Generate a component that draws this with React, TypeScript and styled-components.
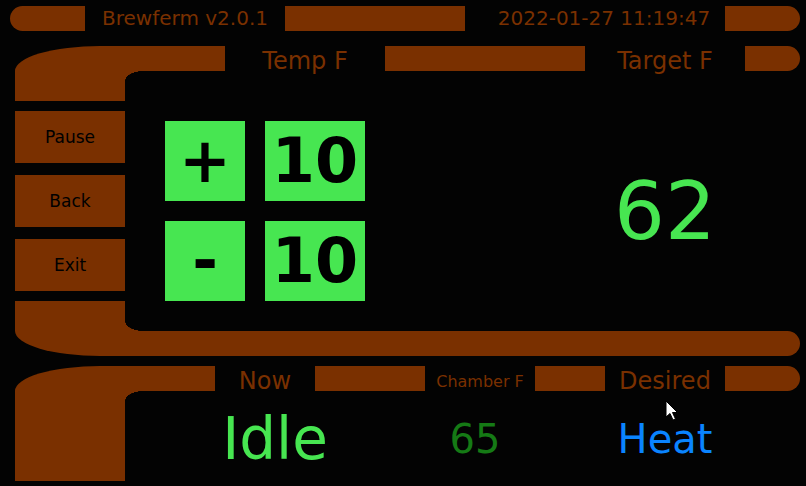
import React from "react";
import styled, { createGlobalStyle } from "styled-components";

const BROWN = "#7a3000";
const GREEN = "#47e651";

const Global = createGlobalStyle`
  html, body { margin: 0; padding: 0; background: #000; }
  body { font-family: "DejaVu Sans", Verdana, sans-serif; }
  * { box-sizing: border-box; }
`;

const Screen = styled.div`
  position: relative;
  width: 806px;
  height: 486px;
  background: #030303;
  display: flex;
  flex-direction: column;
  overflow: hidden;
`;

const TopBar = styled.div`
  display: flex;
  height: 25px;
  margin: 6px 6px 0 10px;
`;

const Row = styled.div`
  display: flex;
  height: 25px;
`;

const Bar = styled.div<{ $w: number }>`
  width: ${(p) => p.$w}px;
  height: 25px;
  background: ${BROWN};
  flex: none;
`;

const Pill = styled(Bar)<{ $side: "left" | "right" }>`
  border-radius: ${(p) => (p.$side === "left" ? "12.5px 0 0 12.5px" : "0 12.5px 12.5px 0")};
`;

const ElbowBar = styled(Bar)`
  border-top-left-radius: 85px 25px;
`;

const Label = styled.div<{ $w: number; $size: number; $pl?: number; $pt?: number }>`
  width: ${(p) => p.$w}px;
  flex: none;
  height: 25px;
  line-height: 25px;
  padding-left: ${(p) => p.$pl ?? 0}px;
  padding-top: ${(p) => p.$pt ?? 0}px;
  font-size: ${(p) => p.$size}px;
  color: ${BROWN};
  text-align: center;
  white-space: nowrap;
`;

const Frame = styled.section<{ $mt: number }>`
  display: flex;
  flex-direction: column;
  width: 785px;
  margin: ${(p) => p.$mt}px 0 0 15px;
`;

const Body = styled.div<{ $h: number }>`
  display: flex;
  height: ${(p) => p.$h}px;
`;

const Side = styled.div`
  width: 110px;
  flex: none;
  display: flex;
  flex-direction: column;
`;

const Stub = styled.div<{ $h: number; $corner: "top" | "bottom"; $mt?: number }>`
  position: relative;
  height: ${(p) => p.$h}px;
  margin-top: ${(p) => p.$mt ?? 0}px;
  background: ${BROWN};
  flex: none;
  &::after {
    content: "";
    position: absolute;
    left: 100%;
    ${(p) => (p.$corner === "top" ? "top: 0;" : "bottom: 0;")}
    width: 18px;
    height: 10px;
    background: radial-gradient(
      18px 10px at 100% ${(p) => (p.$corner === "top" ? "100%" : "0%")},
      transparent 98%,
      ${BROWN} 100%
    );
  }
`;

const SideButtons = styled.div`
  display: flex;
  flex-direction: column;
  gap: 12px;
  margin-top: 10px;
`;

const SideButton = styled.button`
  height: 52px;
  width: 110px;
  border: none;
  padding: 0;
  background: ${BROWN};
  color: #000;
  font-family: "DejaVu Sans", Verdana, sans-serif;
  font-size: 17px;
  cursor: pointer;
`;

const Content = styled.div`
  flex: 1;
  display: flex;
  padding: 50px 0 0 40px;
`;

const Stepper = styled.div`
  display: grid;
  grid-template-columns: 80px 100px;
  grid-auto-rows: 80px;
  gap: 20px;
`;

const StepButton = styled.button`
  border: none;
  padding: 0;
  background: ${GREEN};
  color: #000;
  font-family: "DejaVu Sans", Verdana, sans-serif;
  font-weight: bold;
  font-size: 62px;
  display: flex;
  align-items: center;
  justify-content: center;
  line-height: 1;
`;

const TargetValue = styled.div`
  margin-left: auto;
  margin-right: 55px;
  width: 160px;
  height: 180px;
  display: flex;
  align-items: center;
  justify-content: center;
  font-size: 80px;
  color: ${GREEN};
`;

const Footer = styled.div`
  height: 25px;
  background: ${BROWN};
  border-radius: 0 12.5px 12.5px 0;
  border-bottom-left-radius: 85px 25px;
`;

const StatusGrid = styled.div`
  flex: 1;
  display: grid;
  grid-template-columns: 300px 100px 60px 160px;
  align-items: center;
  padding-top: 6px;
`;

const Status = styled.div<{ $size: number; $color: string }>`
  text-align: center;
  font-size: ${(p) => p.$size}px;
  color: ${(p) => p.$color};
  white-space: nowrap;
`;

const Cursor = styled.svg`
  position: absolute;
  left: 665px;
  top: 400px;
`;

export default function App() {
  return (
    <Screen>
      <Global />
      <TopBar>
        <Pill $w={75} $side="left" />
        <Label $w={200} $size={20}>Brewferm v2.0.1</Label>
        <Bar $w={180} />
        <Label $w={260} $size={20} $pl={18}>2022-01-27 11:19:47</Label>
        <Pill $w={75} $side="right" />
      </TopBar>

      <Frame $mt={15}>
        <Row>
          <ElbowBar $w={210} />
          <Label $w={160} $size={24} $pt={3}>Temp F</Label>
          <Bar $w={200} />
          <Label $w={160} $size={24} $pt={3}>Target F</Label>
          <Pill $w={55} $side="right" />
        </Row>
        <Body $h={260}>
          <Side>
            <Stub $h={30} $corner="top" />
            <SideButtons>
              <SideButton>Pause</SideButton>
              <SideButton>Back</SideButton>
              <SideButton>Exit</SideButton>
            </SideButtons>
            <Stub $h={30} $corner="bottom" $mt={10} />
          </Side>
          <Content>
            <Stepper>
              <StepButton>+</StepButton>
              <StepButton>10</StepButton>
              <StepButton>-</StepButton>
              <StepButton>10</StepButton>
            </Stepper>
            <TargetValue>62</TargetValue>
          </Content>
        </Body>
        <Footer />
      </Frame>

      <Frame $mt={10}>
        <Row>
          <ElbowBar $w={200} />
          <Label $w={100} $size={24} $pt={3}>Now</Label>
          <Bar $w={110} />
          <Label $w={110} $size={16} $pt={3}>Chamber F</Label>
          <Bar $w={70} />
          <Label $w={120} $size={24} $pt={3}>Desired</Label>
          <Pill $w={75} $side="right" />
        </Row>
        <Body $h={90}>
          <Side>
            <Stub $h={90} $corner="top" />
          </Side>
          <StatusGrid>
            <Status $size={58} $color={GREEN}>Idle</Status>
            <Status $size={40} $color="#157a15">65</Status>
            <span />
            <Status $size={40} $color="#0a84ff">Heat</Status>
          </StatusGrid>
        </Body>
      </Frame>

      <Cursor width="14" height="22" viewBox="0 0 14 22">
        <path d="M1 1 L1 17 L5 13.5 L8 20 L10.5 19 L7.5 12.5 L12.5 12.5 Z" fill="#fff" stroke="#000" strokeWidth="1" strokeLinejoin="round" />
      </Cursor>
    </Screen>
  );
}
